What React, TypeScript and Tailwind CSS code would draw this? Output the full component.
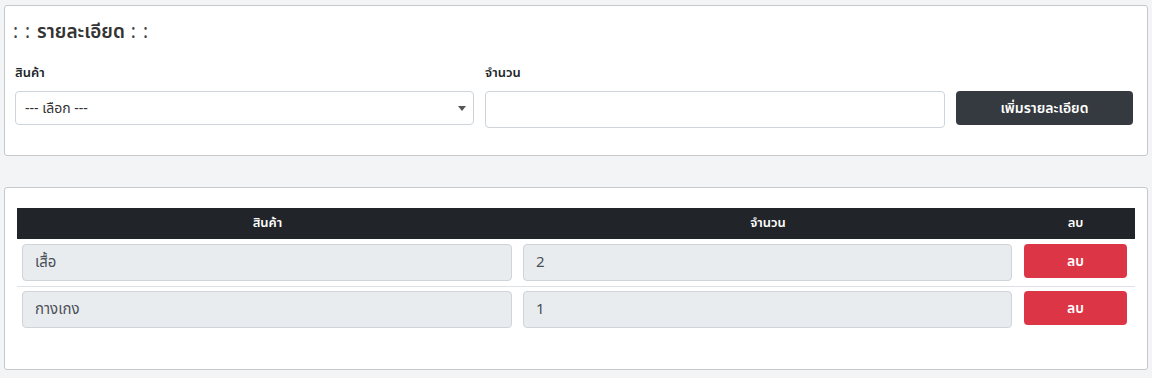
const rows = [
  { name: "เสื้อ", qty: "2" },
  { name: "กางเกง", qty: "1" },
]

const font = { fontFamily: "'Noto Sans Thai', 'Noto Sans', 'DejaVu Sans', sans-serif" }

export default function App() {
  return (
    <div className="min-h-[378px] bg-[#f3f4f6] px-1 pt-[5px] text-[#212529]" style={font}>
      {/* Detail form */}
      <div className="rounded-[3px] border border-[#c6c8cb] bg-white pb-[27px] pl-[8px] pr-[10px] pt-[15px]">
        <h4 className="text-[19px] leading-[24px] text-[#333]">
          <span className="tracking-[1px] text-[#444]">: : </span>
          <span className="font-semibold">รายละเอียด</span>
          <span className="tracking-[1px] text-[#444]"> : :</span>
        </h4>
        <div className="ml-[2px] mt-[18px] flex items-start gap-[11px]">
          <div className="w-[459px]">
            <label className="block text-[13px] font-semibold leading-[20px]">สินค้า</label>
            <div className="relative mt-[8px] flex h-[34px] items-center rounded-[4px] border border-[#ced4da] bg-white pl-[9px] text-[14px] text-[#333]">
              --- เลือก ---
              <span className="absolute right-[7px] top-[14px] h-0 w-0 border-x-[4px] border-t-[5px] border-x-transparent border-t-[#555]" />
            </div>
          </div>
          <div className="w-[460px]">
            <label className="block text-[13px] font-semibold leading-[20px]">จำนวน</label>
            <input className="mt-[8px] block h-[37px] w-full rounded-[4px] border border-[#ced4da] bg-white" />
          </div>
          <button className="mt-[28px] h-[34px] w-[177px] rounded-[4px] bg-[#343a40] text-[14px] font-semibold text-white">
            เพิ่มรายละเอียด
          </button>
        </div>
      </div>

      {/* Detail table */}
      <div className="mt-[31px] rounded-[3px] border border-[#c6c8cb] bg-white px-[12px] pb-[37px] pt-[20px]">
        <div className="grid h-[31px] grid-cols-[501px_500px_115px] items-center bg-[#212529] text-center text-[13px] font-semibold text-white">
          <div>สินค้า</div>
          <div>จำนวน</div>
          <div>ลบ</div>
        </div>
        {rows.map((row, i) => (
          <div
            key={i}
            className={`grid grid-cols-[501px_500px_115px] items-start ${i === 0 ? "border-b border-[#dee2e6] pb-[5px] pt-[5px]" : "pb-[4px] pt-[4px]"}`}
          >
            <div className="pl-[5px] pr-[6px]">
              <div className="flex h-[37px] items-center rounded-[4px] border border-[#ced4da] bg-[#e9ecef] pl-[12px] pt-[2px] text-[15px] text-[#495057]">
                {row.name}
              </div>
            </div>
            <div className="pl-[5px] pr-[6px]">
              <div className="flex h-[37px] items-center rounded-[4px] border border-[#ced4da] bg-[#e9ecef] pl-[12px] pt-[2px] text-[15px] text-[#495057]">
                {row.qty}
              </div>
            </div>
            <div className="pl-[6px]">
              <button className="h-[34px] w-[103px] rounded-[4px] bg-[#dc3545] text-[14px] font-semibold text-white">
                ลบ
              </button>
            </div>
          </div>
        ))}
      </div>
    </div>
  )
}
